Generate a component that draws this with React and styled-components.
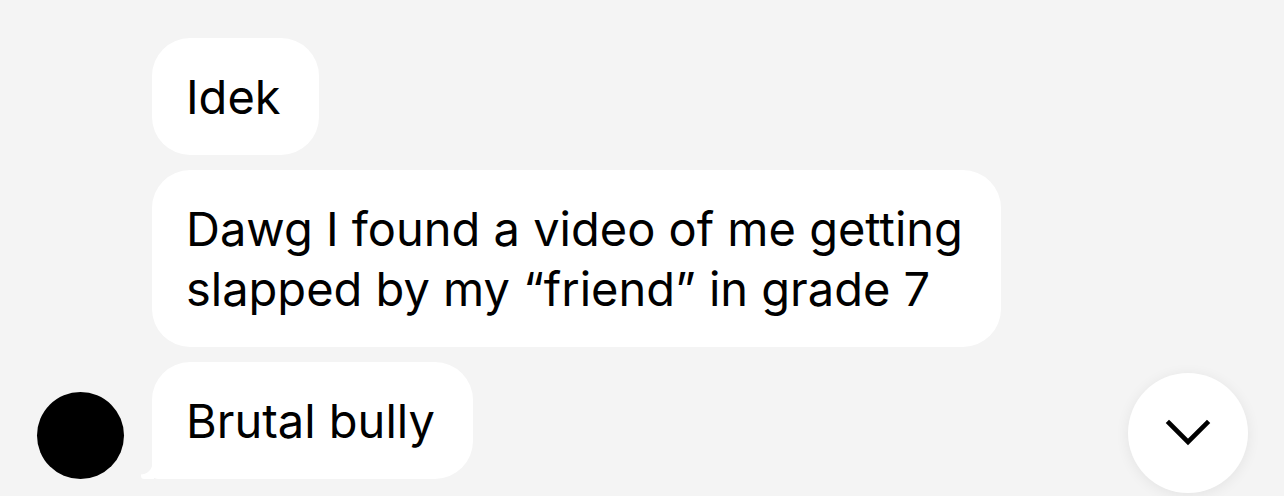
import styled, { createGlobalStyle } from "styled-components"

const GlobalStyle = createGlobalStyle`
  html, body {
    margin: 0;
    padding: 0;
    background: #f4f4f4;
  }
  body {
    font-family: Inter, "Noto Sans", sans-serif;
    color: #000;
  }
`

const messages = [
  { id: 1, text: "Idek" },
  { id: 2, text: "Dawg I found a video of me getting\nslapped by my \u201cfriend\u201d in grade 7" },
  { id: 3, text: "Brutal bully", last: true },
]

function ScrollDownButton() {
  return (
    <FloatButton type="button" aria-label="Scroll to latest">
      <svg width="120" height="120" viewBox="0 0 120 120">
        <polyline
          points="41,50 60,69 79,50"
          fill="none"
          stroke="#000"
          strokeWidth="4.6"
          strokeLinecap="square"
          strokeLinejoin="miter"
        />
      </svg>
    </FloatButton>
  )
}

export default function App() {
  return (
    <>
      <GlobalStyle />
      <Screen>
        <Thread>
          {messages.map(message => (
            <Row key={message.id}>
              <AvatarSlot>{message.last && <Avatar />}</AvatarSlot>
              <Bubble $tail={message.last}>{message.text}</Bubble>
            </Row>
          ))}
        </Thread>
        <ScrollDownButton />
      </Screen>
    </>
  )
}

const Screen = styled.div`
  position: relative;
  width: 1284px;
  height: 496px;
  overflow: hidden;
  background: #f4f4f4;
`

const Thread = styled.div`
  display: flex;
  flex-direction: column;
  gap: 15px;
  padding: 38px 0 0 37px;
`

const Row = styled.div`
  display: flex;
  align-items: flex-end;
  gap: 28px;
`

const AvatarSlot = styled.div`
  width: 87px;
  flex-shrink: 0;
  display: flex;
  align-items: flex-end;
`

const Avatar = styled.div`
  width: 87px;
  height: 87px;
  border-radius: 50%;
  background: #000;
`

const Bubble = styled.div`
  position: relative;
  background: #fff;
  border-radius: 38px;
  border-bottom-left-radius: ${props => (props.$tail ? "6px" : "38px")};
  padding: 28.5px 38px 28.5px 34px;
  font-size: 47px;
  line-height: 60px;
  white-space: pre-line;

  &::before {
    content: "";
    display: ${props => (props.$tail ? "block" : "none")};
    position: absolute;
    left: -11px;
    bottom: 0;
    width: 13px;
    height: 16px;
    border-bottom-left-radius: 3px;
    background: radial-gradient(circle at 0 0, transparent 11px, #fff 11.8px);
  }
`

const FloatButton = styled.button`
  position: absolute;
  right: 36px;
  bottom: 3px;
  width: 120px;
  height: 120px;
  padding: 0;
  border: 0;
  border-radius: 50%;
  background: #fff;
  box-shadow: 0 2px 14px rgba(0, 0, 0, 0.07);
  display: flex;
  align-items: center;
  justify-content: center;
  cursor: pointer;

  svg {
    display: block;
  }
`
